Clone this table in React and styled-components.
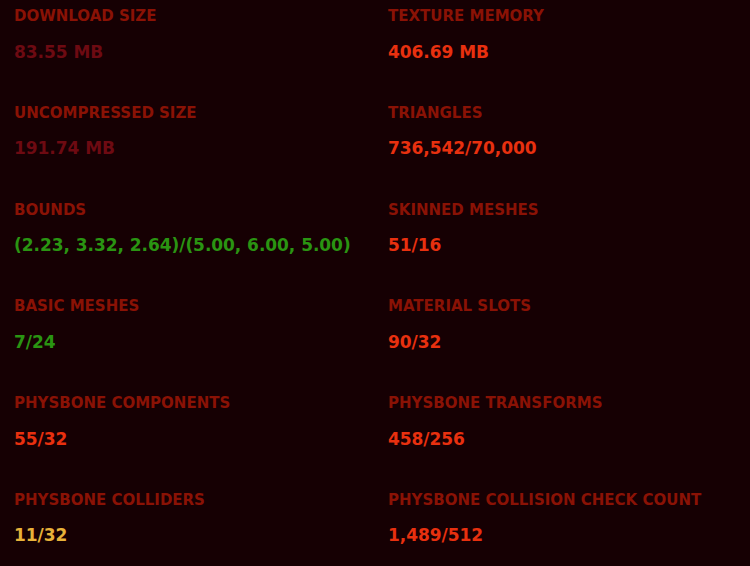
import React from 'react'
import styled, { createGlobalStyle } from 'styled-components'

const Global = createGlobalStyle`
  html, body {
    margin: 0;
    background: #160003;
  }
  body {
    font-family: "DejaVu Sans", "Noto Sans", sans-serif;
  }
`

const Grid = styled.div`
  display: grid;
  grid-template-columns: 374px 1fr;
  grid-auto-rows: 96.8px;
  width: 750px;
  height: 566px;
  padding: 0 0 0 14px;
  box-sizing: border-box;
  background: #160003;
`

const Stat = styled.div`
  display: flex;
  flex-direction: column;
  padding-top: 6px;
`

const Label = styled.div`
  font-size: 15px;
  font-weight: 700;
  color: #8a1205;
  text-transform: uppercase;
  line-height: 20px;
`

const Value = styled.div`
  margin-top: 13.5px;
  font-size: 17px;
  font-weight: 700;
  line-height: 24px;
  letter-spacing: -0.05px;
  color: ${({ tone }) => tones[tone]};
`

const tones = {
  dull: '#6d0a12',
  bad: '#e8300f',
  good: '#2a9412',
  warn: '#e8b23a',
}

const stats = [
  ['Download Size', '83.55 MB', 'dull'],
  ['Texture Memory', '406.69 MB', 'bad'],
  ['Uncompressed Size', '191.74 MB', 'dull'],
  ['Triangles', '736,542/70,000', 'bad'],
  ['Bounds', '(2.23, 3.32, 2.64)/(5.00, 6.00, 5.00)', 'good'],
  ['Skinned Meshes', '51/16', 'bad'],
  ['Basic Meshes', '7/24', 'good'],
  ['Material Slots', '90/32', 'bad'],
  ['PhysBone Components', '55/32', 'bad'],
  ['PhysBone Transforms', '458/256', 'bad'],
  ['PhysBone Colliders', '11/32', 'warn'],
  ['PhysBone Collision Check Count', '1,489/512', 'bad'],
]

export default function App() {
  return (
    <>
      <Global />
      <Grid>
        {stats.map(([label, value, tone]) => (
          <Stat key={label}>
            <Label>{label}</Label>
            <Value tone={tone}>{value}</Value>
          </Stat>
        ))}
      </Grid>
    </>
  )
}
